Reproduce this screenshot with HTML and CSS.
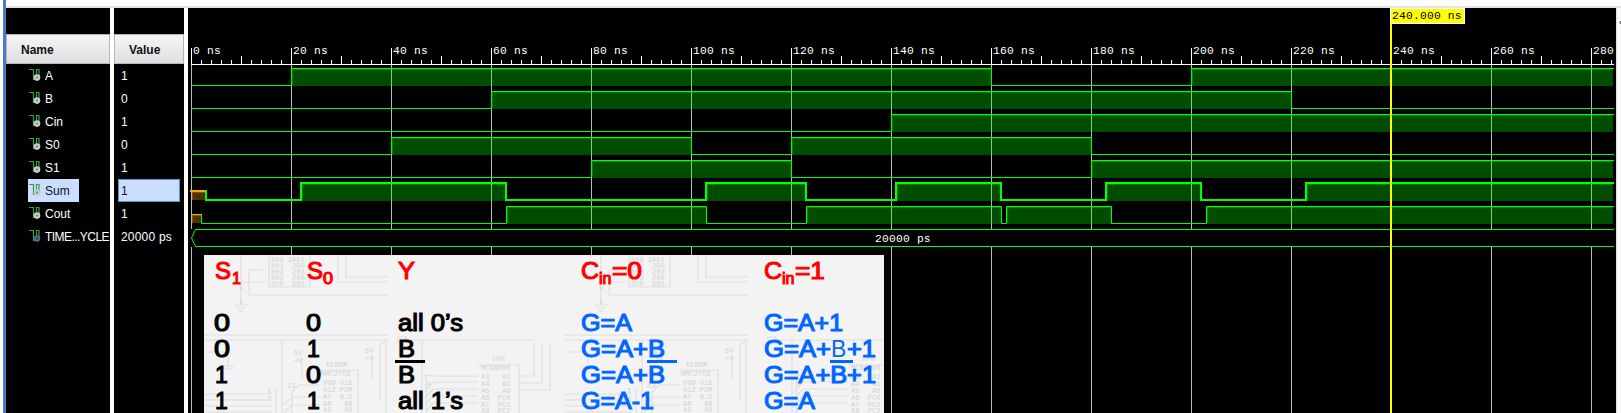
FILE: index.html
```html
<!DOCTYPE html>
<html lang="en">
<head>
<meta charset="utf-8">
<title>Waveform</title>
<link rel="stylesheet" href="styles.css">
</head>
<body>
<svg width="0" height="0" class="defs">
  <defs>
    <symbol id="sig" viewBox="0 0 12 13">
      <path d="M0 .5H5M4.500 0V11M4 10.500H7M7.500 0V8M10 0V9M7 .5H10" fill="none" stroke="#35a04c" stroke-width="1.200"/>
      <circle cx="8" cy="8.600" r="3.300" fill="var(--dot, #c9c9c9)"/>
      <circle cx="8" cy="8.600" r="1" fill="var(--hole, #777)"/>
    </symbol>
  </defs>
</svg>
<div class="app">
  <section class="col names">
    <div class="blank"></div>
    <div class="head">Name</div>
    <ul class="list">
      <li><span class="item"><svg class="icon"><use href="#sig"/></svg>A</span></li>
      <li><span class="item"><svg class="icon"><use href="#sig"/></svg>B</span></li>
      <li><span class="item"><svg class="icon"><use href="#sig"/></svg>Cin</span></li>
      <li><span class="item"><svg class="icon"><use href="#sig"/></svg>S0</span></li>
      <li><span class="item"><svg class="icon"><use href="#sig"/></svg>S1</span></li>
      <li><span class="item selected"><svg class="icon"><use href="#sig"/></svg>Sum</span></li>
      <li><span class="item"><svg class="icon"><use href="#sig"/></svg>Cout</span></li>
      <li><span class="item long"><svg class="icon constant"><use href="#sig"/></svg>TIME...YCLE</span></li>
    </ul>
  </section>
  <section class="col values">
    <div class="blank"></div>
    <div class="head">Value</div>
    <ul class="list">
      <li><span class="val">1</span></li>
      <li><span class="val">0</span></li>
      <li><span class="val">1</span></li>
      <li><span class="val">0</span></li>
      <li><span class="val">1</span></li>
      <li><span class="val selected">1</span></li>
      <li><span class="val">1</span></li>
      <li><span class="val">20000 ps</span></li>
    </ul>
  </section>
  <section class="wave">
    <svg class="plot" viewBox="188 8 1428 405" width="1428" height="405">
      <defs>
        <pattern id="t2" x="191" y="60" width="10" height="4" patternUnits="userSpaceOnUse"><rect width="1" height="4" fill="#fff"/></pattern>
        <pattern id="t10" x="191" y="56" width="50" height="8" patternUnits="userSpaceOnUse"><rect width="1" height="8" fill="#fff"/></pattern>
        <pattern id="t20" x="191" y="48" width="100" height="16" patternUnits="userSpaceOnUse"><rect width="1" height="16" fill="#fff"/></pattern>
        <pattern id="grid" x="191" y="0" width="100" height="500" patternUnits="userSpaceOnUse"><rect width="1" height="500" fill="#b9b9b9"/></pattern>
      </defs>
      <rect x="191" y="60" width="1423" height="4" fill="url(#t2)"/>
      <rect x="191" y="56" width="1423" height="8" fill="url(#t10)"/>
      <rect x="191" y="48" width="1423" height="16" fill="url(#t20)"/>
      <rect x="191" y="64" width="1423" height="1" fill="#fff"/>
      <rect x="191" y="65" width="1423" height="164" fill="url(#grid)"/>
      <rect x="191" y="247" width="1423" height="166" fill="url(#grid)"/>
      <g class="mono">
        <text x="193" y="54">0 ns</text><text x="293" y="54">20 ns</text><text x="393" y="54">40 ns</text>
        <text x="493" y="54">60 ns</text><text x="593" y="54">80 ns</text><text x="693" y="54">100 ns</text>
        <text x="793" y="54">120 ns</text><text x="893" y="54">140 ns</text><text x="993" y="54">160 ns</text>
        <text x="1093" y="54">180 ns</text><text x="1193" y="54">200 ns</text><text x="1293" y="54">220 ns</text>
        <text x="1393" y="54">240 ns</text><text x="1493" y="54">260 ns</text><text x="1593" y="54">280</text>
      </g>
      <path class="fill" d="M292 69H991V86H292zM1192 69H1613V86H1192zM492 92H1291V109H492zM892 115H1613V132H892zM392 138H691V155H392zM792 138H1091V155H792zM592 161H791V178H592zM1092 161H1613V178H1092z
        M302 184H505V201H302zM707 184H805V201H707zM897 184H1000V201H897zM1107 184H1200V201H1107zM1307 184H1613V201H1307z
        M507 207H706V224H507zM807 207H1001V224H807zM1007 207H1111V224H1007zM1207 207H1613V224H1207z"/>
      <path class="edge" d="M292.500 85V69.500H991M1192.500 85V69.500H1612M492.500 108V92.500H1291M892.500 131V115.500H1612M392.500 154V138.500H691M792.500 154V138.500H1091M592.500 177V161.500H791M1092.500 177V161.500H1612
        M302.500 200V184.500H505M707.500 200V184.500H805M897.500 200V184.500H1000M1107.500 200V184.500H1200M1307.500 200V184.500H1612
        M507.500 223V207.500H706M807.500 223V207.500H1001M1007.500 223V207.500H1111M1207.500 223V207.500H1612"/>
      <path class="line" d="M191 85.500H291.500V68.500H991.500V85.500H1191.500V68.500H1614
        M191 108.500H491.500V91.500H1291.500V108.500H1614
        M191 131.500H891.500V114.500H1614
        M191 154.500H391.500V137.500H691.500V154.500H791.500V137.500H1091.500V154.500H1614
        M191 177.500H591.500V160.500H791.500V177.500H1091.500V160.500H1614
        M201.500 214V223.500H506.500V206.500H706.500V223.500H806.500V206.500H1001.500V223.500H1006.500V206.500H1111.500V223.500H1206.500V206.500H1614
        M1614 229.500H195.500L191.500 238L195.500 246.500H1614"/>
      <path class="line thick" d="M206 190V200H301V183H506V200H706V183H806V200H896V183H1001V200H1106V183H1201V200H1306V183H1614"/>
      <path d="M192 192H205V200H192zM192 215H201V223H192z" fill="#ffa500" fill-opacity=".3"/>
      <path d="M192.500 200V192.500H205M192.500 223V215.500H201" fill="none" stroke="#ffa500" stroke-opacity=".3"/>
      <path d="M190 190H205V192H190zM191 214H201V215H191z" fill="#ffa500"/>
      <text class="mono" x="875" y="242">20000 ps</text>
      <path d="M1390 8H1392V413H1390z" fill="#ff0"/>
      <path d="M1390 8H1465V24H1390z" fill="#fff"/>
      <path d="M1391 9H1464V23H1391z" fill="#ff0"/>
      <text class="mono dark" x="1392" y="19">240.000 ns</text>

      <rect x="204" y="255" width="680" height="158" fill="#f3f3f3"/>
      <defs>
        <g id="sheet-top" class="sketch">
          <path d="M37 0V50M30 50H44M33 53H41M35 56H39M37 27H60M45 15H60M45 15V40H184M134 0V27H184M142 0V22H184M65 0V32H106V0"/>
          <circle cx="37" cy="33" r="1.500"/><circle cx="37" cy="47" r="1.500"/>
          <text x="67" y="7">000 2A51</text><text x="67" y="13">001&#160; 200</text><text x="67" y="19">002&#160; 203</text><text x="67" y="25">003&#160; 205</text><text x="67" y="31">3V0&#160; 203</text>
        </g>
        <g id="sheet-left" class="sketch">
          <path d="M0 80H184M0 85H184M78 85V158M0 97H24V110M17 111H31M20 114H28M88 158V137L95 130H116M0 139H68M0 145H68M0 151H68M0 157H68M72 133V158M80 150L88 142H116M80 158L88 150H116M116 115H154V158M98 124V103M168 124V100M176 145V90L184 86M182 158V90"/>
          <text x="90" y="100">5V</text><text x="90" y="108">+V</text><text x="161" y="98">5V</text><text x="161" y="106">+V</text><text x="122" y="112">EEROM</text><text x="117" y="121">NMC27C6</text><text x="119" y="130">V99 V16</text><text x="119" y="137">A12 PGM</text><text x="119" y="144">A7&#160; N.C</text><text x="119" y="151">A6&#160;&#160; A8</text><text x="119" y="157">A5&#160;&#160; A9</text><text x="83" y="133">13</text><text x="63" y="138">1</text><text x="63" y="146">2</text>
        </g>
        <g id="sheet-right" class="sketch">
          <path d="M18 85H146M34 85V158M38 158V120L45 121H90M38 135L45 127H90M38 142L45 134H90M38 149L45 141H90M38 156L45 148H90M90 110H131V158M131 121H146V88M131 128H154V88M131 135H162V88M10 82H18V88H10z"/>
          <text x="104" y="106">CPU</text><text x="93" y="115">MC68008</text><text x="93" y="124">A3&#160;&#160; A2</text><text x="93" y="131">A4&#160;&#160; A1</text><text x="93" y="138">A5&#160;&#160; A0</text><text x="93" y="145">A6&#160; PC0</text><text x="93" y="152">A7&#160; PC1</text><text x="93" y="158">A8&#160; PC2</text><text x="38" y="131">4</text>
        </g>
        <clipPath id="sheet-clip"><rect x="204" y="255" width="680" height="158"/></clipPath>
      </defs>
      <g clip-path="url(#sheet-clip)">
        <use href="#sheet-top" x="204" y="255"/>
        <use href="#sheet-top" x="564" y="255"/>
        <use href="#sheet-left" x="204" y="255"/>
        <use href="#sheet-left" x="564" y="255"/>
        <use href="#sheet-right" x="388" y="255"/>
        <use href="#sheet-right" x="758" y="255"/>
      </g>
      <g class="slide red">
        <text x="215" y="279" textLength="16" lengthAdjust="spacingAndGlyphs">S</text><text class="sub" x="232" y="284">1</text>
        <text x="307" y="279" textLength="16" lengthAdjust="spacingAndGlyphs">S</text><text class="sub" x="323" y="284" textLength="10" lengthAdjust="spacingAndGlyphs">0</text>
        <text x="398" y="279" textLength="17" lengthAdjust="spacingAndGlyphs">Y</text>
        <text x="581" y="279" textLength="18" lengthAdjust="spacingAndGlyphs">C</text><text class="sub" x="599" y="284">in</text><text x="612" y="279" textLength="30" lengthAdjust="spacingAndGlyphs">=0</text>
        <text x="764" y="279" textLength="18" lengthAdjust="spacingAndGlyphs">C</text><text class="sub" x="782" y="284">in</text><text x="795" y="279" textLength="30" lengthAdjust="spacingAndGlyphs">=1</text>
      </g>
      <g class="slide black">
        <text x="214" y="331" textLength="16" lengthAdjust="spacingAndGlyphs">0</text><text x="306" y="331" textLength="15" lengthAdjust="spacingAndGlyphs">0</text><text x="398" y="331" textLength="65" lengthAdjust="spacingAndGlyphs">all 0’s</text>
        <text x="214" y="357" textLength="16" lengthAdjust="spacingAndGlyphs">0</text><text x="307" y="357">1</text><text x="398" y="357" textLength="17" lengthAdjust="spacingAndGlyphs">B</text>
        <text x="215" y="383">1</text><text x="306" y="383" textLength="15" lengthAdjust="spacingAndGlyphs">0</text><text x="398" y="383" textLength="17" lengthAdjust="spacingAndGlyphs">B</text>
        <text x="215" y="409">1</text><text x="307" y="409">1</text><text x="398" y="409" textLength="65" lengthAdjust="spacingAndGlyphs">all 1’s</text>
      </g>
      <g class="slide blue">
        <text x="581" y="331" textLength="51" lengthAdjust="spacingAndGlyphs">G=A</text><text x="764" y="331" textLength="79" lengthAdjust="spacingAndGlyphs">G=A+1</text>
        <text x="581" y="357" textLength="84" lengthAdjust="spacingAndGlyphs">G=A+B</text><text x="764" y="357" textLength="67" lengthAdjust="spacingAndGlyphs">G=A+</text><text class="thin" x="831" y="357">B</text><text x="847" y="357" textLength="29" lengthAdjust="spacingAndGlyphs">+1</text>
        <text x="581" y="383" textLength="84" lengthAdjust="spacingAndGlyphs">G=A+B</text><text x="764" y="383" textLength="112" lengthAdjust="spacingAndGlyphs">G=A+B+1</text>
        <text x="581" y="409" textLength="73" lengthAdjust="spacingAndGlyphs">G=A-1</text><text x="764" y="409" textLength="51" lengthAdjust="spacingAndGlyphs">G=A</text>
      </g>
      <path d="M395 360H425V363H395z" fill="#000"/>
      <path d="M647 360H677V363H647zM830 360H853V363H830z" fill="#06f"/>
    </svg>
  </section>
  <aside class="rail"><svg width="2" height="5" viewBox="0 0 2 5"><path d="M0 2H2V3H0zM1 1H2V4H1z" fill="#777"/></svg></aside>
</div>
</body>
</html>
```
FILE: styles.css
```css
* { box-sizing: border-box; }
body {
  margin: 0;
  background: #fff;
  font-family: "Liberation Sans", Arial, sans-serif;
  font-size: 12px;
  height: 413px;
  overflow: hidden;
}
.defs { display: block; }
.app {
  display: grid;
  grid-template-columns: 104px 70px 1428px 5px;
  column-gap: 4px;
  height: 413px;
  border-left: 3px solid #4a7bc8;
  margin-left: 3px;
  padding-top: 8px;
  background: linear-gradient(#fff 6px, #e6e6e6 6px, #e6e6e6 8px, #fff 8px);
}
.col {
  display: flex;
  flex-direction: column;
  background: #000;
  overflow: hidden;
}
.blank { height: 26px; flex: none; }
.head {
  flex: none;
  height: 30px;
  border: 1px solid #b5b5b8;
  background: linear-gradient(#f5f5f6, #dfdfe2);
  font-weight: bold;
  line-height: 30px;
  padding-left: 14px;
  color: #111;
}
.list {
  list-style: none;
  margin: 0;
  padding: 0;
  color: #fff;
}
.list li { height: 23px; display: flex; white-space: nowrap; }
.names .list li { padding-left: 22px; }
.item {
  display: flex;
  height: 23px;
  line-height: 25px;
  padding: 0 8px 0 1px;
}
.item.long { letter-spacing: -.55px; padding-right: 0; }
.icon { width: 12px; height: 13px; margin: 5px 4px 0 0; flex: none; }
.constant { --dot: #4a658f; --hole: #243a60; }
.selected { background: #cbdeff; color: #111; }
.item.selected { padding-right: 9px; }
.values .list li { padding-left: 4px; }
.val {
  width: 62px;
  height: 23px;
  line-height: 25px;
  padding-left: 3px;
  letter-spacing: .2px;
}
.val.selected { border: 1px solid #4c96cf; line-height: 23px; padding-left: 2px; }
.wave { background: #000; height: 405px; }
.plot { display: block; }
.rail {
  margin-left: -4px;
  border-left: 1px solid #dedede;
  background: #fafafa;
  padding: 6px 0 0 2px;
}
.mono { font: 11.3px "Liberation Mono", monospace; letter-spacing: .2px; fill: #fff; }
.mono.dark { fill: #000; }
.fill { fill: #0f0; fill-opacity: .3; }
.edge { fill: none; stroke: #0f0; stroke-opacity: .3; }
.line { fill: none; stroke: #0f0; stroke-width: 1; }
.thick { stroke-width: 2; }
.sketch path { fill: none; stroke: #dfdfdf; stroke-width: 1.2; }
.sketch circle { fill: #dadada; }
.sketch text { font: 7px "Liberation Mono", monospace; fill: #d2d2d2; }
.slide { font: 23px "Liberation Sans", Arial, sans-serif; stroke-width: 1.1; }
.slide .sub { font-size: 16px; }
.red { fill: #f00; stroke: #f00; }
.black { fill: #000; stroke: #000; }
.blue { fill: #06f; stroke: #06f; }
.blue .thin { stroke: none; }
```
